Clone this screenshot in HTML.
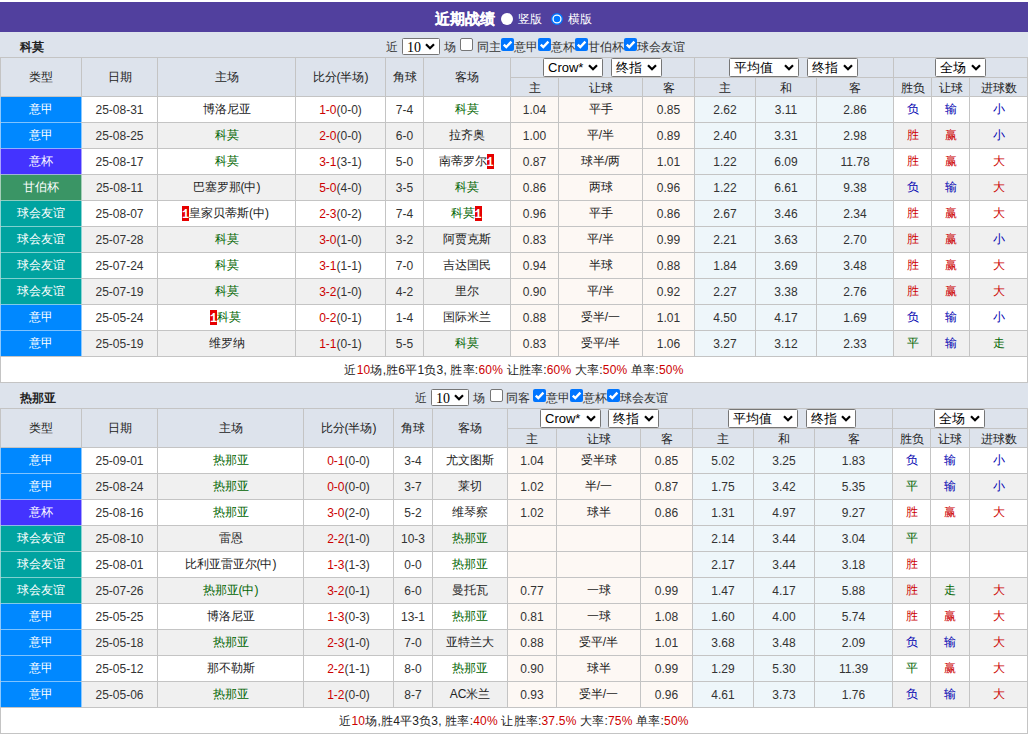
<!DOCTYPE html><html><head><meta charset="utf-8"><style>
html,body{margin:0;padding:0;background:#fff;width:1030px;height:734px;overflow:hidden}
body{font-family:"Liberation Sans",sans-serif;position:relative}
div{position:absolute;white-space:nowrap;box-sizing:content-box}
.bd{display:inline-block;background:#e60000;color:#fff;font-family:"Liberation Mono",monospace;font-weight:bold;font-size:12px;line-height:18px;height:15px;width:7px;text-align:center;vertical-align:top;margin-top:5px;overflow:hidden}
.sel{background:#fff;border:1px solid #767676;border-radius:1.5px}
.sel .lab{position:absolute;left:4px;top:0;bottom:0;line-height:18px;color:#000}
.chev{position:absolute}
.cb{width:11px;height:11px;border-radius:2px}
.cb.off{background:#fff;border:1px solid #767676;width:11px;height:11px}
.cb.on{background:#0075ff;width:13px;height:13px}
.cb svg{position:absolute;left:0;top:0}
.rad{border-radius:50%}
svg{display:block}
</style></head><body><div style="left:0px;top:2px;width:1028px;height:30px;background:#51409e"></div>
<div style="left:435px;top:4px;height:30px;line-height:30px;font-size:15px;font-weight:bold;color:#fff;-webkit-text-stroke:0.2px #fff">近期战绩</div>
<div class="rad" style="left:501px;top:12.5px;width:12px;height:12px;background:#fff"></div>
<div style="left:518px;top:4px;height:30px;line-height:30px;font-size:12px;color:#fff">竖版</div>
<div style="left:551px;top:12.5px;width:12px;height:12px"><svg width="12" height="12" viewBox="0 0 12 12"><circle cx="6" cy="6" r="5.3" fill="#fff" stroke="#0075ff" stroke-width="1.4"/><circle cx="6" cy="6" r="3.3" fill="#0075ff"/></svg></div>
<div style="left:568px;top:4px;height:30px;line-height:30px;font-size:12px;color:#fff">横版</div>
<div style="left:0px;top:32px;width:1028px;height:25px;background:#dde3ec"></div>
<div style="left:20px;top:35px;height:25px;line-height:25px;font-size:12px;font-weight:bold;color:#222">科莫</div>
<div style="left:386px;top:32px;height:25px;line-height:31px;font-size:12px;color:#333">近</div>
<div class="sel" style="left:402px;top:38px;width:36px;height:15px;"><span class="lab" style="font-size:14px;font-family:'Liberation Serif',serif;left:4px;line-height:17px">10</span><svg class="chev" width="10" height="7" viewBox="0 0 10 7" style="right:4px;top:4px"><path d="M1 1.2 L5 5.2 L9 1.2" stroke="#000" stroke-width="2.2" fill="none"/></svg></div>
<div style="left:444px;top:32px;height:25px;line-height:31px;font-size:12px;color:#333">场</div>
<div class="cb off" style="left:460px;top:38px"></div>
<div style="left:477px;top:32px;height:25px;line-height:31px;font-size:12px;color:#333">同主</div>
<div class="cb on" style="left:501px;top:38px"><svg width="13" height="13" viewBox="0 0 13 13"><path d="M2.8 6.6 L5.3 9.1 L10.4 3.6" stroke="#fff" stroke-width="2.4" fill="none"/></svg></div>
<div style="left:514px;top:32px;height:25px;line-height:31px;font-size:12px;color:#333">意甲</div>
<div class="cb on" style="left:538px;top:38px"><svg width="13" height="13" viewBox="0 0 13 13"><path d="M2.8 6.6 L5.3 9.1 L10.4 3.6" stroke="#fff" stroke-width="2.4" fill="none"/></svg></div>
<div style="left:551px;top:32px;height:25px;line-height:31px;font-size:12px;color:#333">意杯</div>
<div class="cb on" style="left:575px;top:38px"><svg width="13" height="13" viewBox="0 0 13 13"><path d="M2.8 6.6 L5.3 9.1 L10.4 3.6" stroke="#fff" stroke-width="2.4" fill="none"/></svg></div>
<div style="left:588px;top:32px;height:25px;line-height:31px;font-size:12px;color:#333">甘伯杯</div>
<div class="cb on" style="left:624px;top:38px"><svg width="13" height="13" viewBox="0 0 13 13"><path d="M2.8 6.6 L5.3 9.1 L10.4 3.6" stroke="#fff" stroke-width="2.4" fill="none"/></svg></div>
<div style="left:637px;top:32px;height:25px;line-height:31px;font-size:12px;color:#333">球会友谊</div>
<div style="left:0px;top:57px;width:1028px;height:39px;background:#dde3ec"></div>
<div style="left:0px;top:97px;width:1028px;height:25px;background:#fff"></div>
<div style="left:511px;top:97px;width:183px;height:25px;background:#fdf8f4"></div>
<div style="left:695px;top:97px;width:198px;height:25px;background:#eef6fa"></div>
<div style="left:1px;top:97px;width:80px;height:25px;background:#0088ff"></div>
<div style="left:0px;top:123px;width:1028px;height:25px;background:#f0f0f0"></div>
<div style="left:511px;top:123px;width:183px;height:25px;background:#fdf8f4"></div>
<div style="left:695px;top:123px;width:198px;height:25px;background:#eef6fa"></div>
<div style="left:1px;top:123px;width:80px;height:25px;background:#0088ff"></div>
<div style="left:0px;top:149px;width:1028px;height:25px;background:#fff"></div>
<div style="left:511px;top:149px;width:183px;height:25px;background:#fdf8f4"></div>
<div style="left:695px;top:149px;width:198px;height:25px;background:#eef6fa"></div>
<div style="left:1px;top:149px;width:80px;height:25px;background:#4433ff"></div>
<div style="left:0px;top:175px;width:1028px;height:25px;background:#f0f0f0"></div>
<div style="left:511px;top:175px;width:183px;height:25px;background:#fdf8f4"></div>
<div style="left:695px;top:175px;width:198px;height:25px;background:#eef6fa"></div>
<div style="left:1px;top:175px;width:80px;height:25px;background:#3a9565"></div>
<div style="left:0px;top:201px;width:1028px;height:25px;background:#fff"></div>
<div style="left:511px;top:201px;width:183px;height:25px;background:#fdf8f4"></div>
<div style="left:695px;top:201px;width:198px;height:25px;background:#eef6fa"></div>
<div style="left:1px;top:201px;width:80px;height:25px;background:#00a3a0"></div>
<div style="left:0px;top:227px;width:1028px;height:25px;background:#f0f0f0"></div>
<div style="left:511px;top:227px;width:183px;height:25px;background:#fdf8f4"></div>
<div style="left:695px;top:227px;width:198px;height:25px;background:#eef6fa"></div>
<div style="left:1px;top:227px;width:80px;height:25px;background:#00a3a0"></div>
<div style="left:0px;top:253px;width:1028px;height:25px;background:#fff"></div>
<div style="left:511px;top:253px;width:183px;height:25px;background:#fdf8f4"></div>
<div style="left:695px;top:253px;width:198px;height:25px;background:#eef6fa"></div>
<div style="left:1px;top:253px;width:80px;height:25px;background:#00a3a0"></div>
<div style="left:0px;top:279px;width:1028px;height:25px;background:#f0f0f0"></div>
<div style="left:511px;top:279px;width:183px;height:25px;background:#fdf8f4"></div>
<div style="left:695px;top:279px;width:198px;height:25px;background:#eef6fa"></div>
<div style="left:1px;top:279px;width:80px;height:25px;background:#00a3a0"></div>
<div style="left:0px;top:305px;width:1028px;height:25px;background:#fff"></div>
<div style="left:511px;top:305px;width:183px;height:25px;background:#fdf8f4"></div>
<div style="left:695px;top:305px;width:198px;height:25px;background:#eef6fa"></div>
<div style="left:1px;top:305px;width:80px;height:25px;background:#0088ff"></div>
<div style="left:0px;top:331px;width:1028px;height:25px;background:#f0f0f0"></div>
<div style="left:511px;top:331px;width:183px;height:25px;background:#fdf8f4"></div>
<div style="left:695px;top:331px;width:198px;height:25px;background:#eef6fa"></div>
<div style="left:1px;top:331px;width:80px;height:25px;background:#0088ff"></div>
<div style="left:0px;top:357px;width:1028px;height:25px;background:#fff"></div>
<div style="left:0px;top:57px;width:1028px;height:1px;background:#c4c4c4"></div>
<div style="left:510px;top:77px;width:518px;height:1px;background:#c4c4c4"></div>
<div style="left:0px;top:96px;width:1028px;height:1px;background:#c4c4c4"></div>
<div style="left:81px;top:122px;width:947px;height:1px;background:#c4c4c4"></div>
<div style="left:1px;top:122px;width:80px;height:1px;background:rgb(127,195,255)"></div>
<div style="left:81px;top:148px;width:947px;height:1px;background:#c4c4c4"></div>
<div style="left:1px;top:148px;width:80px;height:1px;background:rgb(144,174,255)"></div>
<div style="left:81px;top:174px;width:947px;height:1px;background:#c4c4c4"></div>
<div style="left:1px;top:174px;width:80px;height:1px;background:rgb(159,177,216)"></div>
<div style="left:81px;top:200px;width:947px;height:1px;background:#c4c4c4"></div>
<div style="left:1px;top:200px;width:80px;height:1px;background:rgb(142,205,192)"></div>
<div style="left:81px;top:226px;width:947px;height:1px;background:#c4c4c4"></div>
<div style="left:1px;top:226px;width:80px;height:1px;background:rgb(127,209,207)"></div>
<div style="left:81px;top:252px;width:947px;height:1px;background:#c4c4c4"></div>
<div style="left:1px;top:252px;width:80px;height:1px;background:rgb(127,209,207)"></div>
<div style="left:81px;top:278px;width:947px;height:1px;background:#c4c4c4"></div>
<div style="left:1px;top:278px;width:80px;height:1px;background:rgb(127,209,207)"></div>
<div style="left:81px;top:304px;width:947px;height:1px;background:#c4c4c4"></div>
<div style="left:1px;top:304px;width:80px;height:1px;background:rgb(127,202,231)"></div>
<div style="left:81px;top:330px;width:947px;height:1px;background:#c4c4c4"></div>
<div style="left:1px;top:330px;width:80px;height:1px;background:rgb(127,195,255)"></div>
<div style="left:81px;top:356px;width:947px;height:1px;background:#c4c4c4"></div>
<div style="left:0px;top:356px;width:82px;height:1px;background:#c4c4c4"></div>
<div style="left:0px;top:382px;width:1028px;height:1px;background:#c4c4c4"></div>
<div style="left:0px;top:57px;width:1px;height:326px;background:#c4c4c4"></div>
<div style="left:81px;top:57px;width:1px;height:300px;background:#c4c4c4"></div>
<div style="left:157px;top:57px;width:1px;height:300px;background:#c4c4c4"></div>
<div style="left:295px;top:57px;width:1px;height:300px;background:#c4c4c4"></div>
<div style="left:385px;top:57px;width:1px;height:300px;background:#c4c4c4"></div>
<div style="left:423px;top:57px;width:1px;height:300px;background:#c4c4c4"></div>
<div style="left:510px;top:57px;width:1px;height:300px;background:#c4c4c4"></div>
<div style="left:558px;top:77px;width:1px;height:280px;background:#c4c4c4"></div>
<div style="left:642px;top:77px;width:1px;height:280px;background:#c4c4c4"></div>
<div style="left:694px;top:57px;width:1px;height:300px;background:#c4c4c4"></div>
<div style="left:755px;top:77px;width:1px;height:280px;background:#c4c4c4"></div>
<div style="left:816px;top:77px;width:1px;height:280px;background:#c4c4c4"></div>
<div style="left:893px;top:57px;width:1px;height:300px;background:#c4c4c4"></div>
<div style="left:931px;top:77px;width:1px;height:280px;background:#c4c4c4"></div>
<div style="left:969px;top:77px;width:1px;height:280px;background:#c4c4c4"></div>
<div style="left:1027px;top:57px;width:1px;height:326px;background:#c4c4c4"></div>
<div style="left:0px;top:97px;width:1px;height:25px;background:rgb(140,201,255)"></div>
<div style="left:81px;top:97px;width:1px;height:25px;background:rgb(140,201,255)"></div>
<div style="left:0px;top:123px;width:1px;height:25px;background:rgb(140,201,255)"></div>
<div style="left:81px;top:123px;width:1px;height:25px;background:rgb(140,201,255)"></div>
<div style="left:0px;top:149px;width:1px;height:25px;background:rgb(170,163,255)"></div>
<div style="left:81px;top:149px;width:1px;height:25px;background:rgb(170,163,255)"></div>
<div style="left:0px;top:175px;width:1px;height:25px;background:rgb(166,207,185)"></div>
<div style="left:81px;top:175px;width:1px;height:25px;background:rgb(166,207,185)"></div>
<div style="left:0px;top:201px;width:1px;height:25px;background:rgb(140,213,212)"></div>
<div style="left:81px;top:201px;width:1px;height:25px;background:rgb(140,213,212)"></div>
<div style="left:0px;top:227px;width:1px;height:25px;background:rgb(140,213,212)"></div>
<div style="left:81px;top:227px;width:1px;height:25px;background:rgb(140,213,212)"></div>
<div style="left:0px;top:253px;width:1px;height:25px;background:rgb(140,213,212)"></div>
<div style="left:81px;top:253px;width:1px;height:25px;background:rgb(140,213,212)"></div>
<div style="left:0px;top:279px;width:1px;height:25px;background:rgb(140,213,212)"></div>
<div style="left:81px;top:279px;width:1px;height:25px;background:rgb(140,213,212)"></div>
<div style="left:0px;top:305px;width:1px;height:25px;background:rgb(140,201,255)"></div>
<div style="left:81px;top:305px;width:1px;height:25px;background:rgb(140,201,255)"></div>
<div style="left:0px;top:331px;width:1px;height:25px;background:rgb(140,201,255)"></div>
<div style="left:81px;top:331px;width:1px;height:25px;background:rgb(140,201,255)"></div>
<div style="left:1px;top:58px;width:80px;height:38px;line-height:38px;text-align:center;color:#222;font-size:12px;">类型</div>
<div style="left:82px;top:58px;width:75px;height:38px;line-height:38px;text-align:center;color:#222;font-size:12px;">日期</div>
<div style="left:158px;top:58px;width:137px;height:38px;line-height:38px;text-align:center;color:#222;font-size:12px;">主场</div>
<div style="left:296px;top:58px;width:89px;height:38px;line-height:38px;text-align:center;color:#222;font-size:12px;">比分(半场)</div>
<div style="left:386px;top:58px;width:37px;height:38px;line-height:38px;text-align:center;color:#222;font-size:12px;">角球</div>
<div style="left:424px;top:58px;width:86px;height:38px;line-height:38px;text-align:center;color:#222;font-size:12px;">客场</div>
<div style="left:511px;top:79px;width:47px;height:18px;line-height:18px;text-align:center;color:#222;font-size:12px;">主</div>
<div style="left:559px;top:79px;width:83px;height:18px;line-height:18px;text-align:center;color:#222;font-size:12px;">让球</div>
<div style="left:643px;top:79px;width:51px;height:18px;line-height:18px;text-align:center;color:#222;font-size:12px;">客</div>
<div style="left:695px;top:79px;width:60px;height:18px;line-height:18px;text-align:center;color:#222;font-size:12px;">主</div>
<div style="left:756px;top:79px;width:60px;height:18px;line-height:18px;text-align:center;color:#222;font-size:12px;">和</div>
<div style="left:817px;top:79px;width:76px;height:18px;line-height:18px;text-align:center;color:#222;font-size:12px;">客</div>
<div style="left:894px;top:79px;width:37px;height:18px;line-height:18px;text-align:center;color:#222;font-size:12px;">胜负</div>
<div style="left:932px;top:79px;width:37px;height:18px;line-height:18px;text-align:center;color:#222;font-size:12px;">让球</div>
<div style="left:970px;top:79px;width:57px;height:18px;line-height:18px;text-align:center;color:#222;font-size:12px;">进球数</div>
<div style="left:1px;top:97px;width:80px;height:25px;line-height:25px;text-align:center;color:#fff;font-size:12px;">意甲</div>
<div style="left:82px;top:98px;width:75px;height:25px;line-height:25px;text-align:center;color:#333;font-size:12px;">25-08-31</div>
<div style="left:158px;top:97px;width:137px;height:25px;line-height:25px;text-align:center;color:#222;font-size:12px;">博洛尼亚</div>
<div style="left:296px;top:98px;width:89px;height:25px;line-height:25px;text-align:center;color:#222;font-size:12px;"><span style="color:#c00">1-0</span><span style="color:#333">(0-0)</span></div>
<div style="left:386px;top:98px;width:37px;height:25px;line-height:25px;text-align:center;color:#333;font-size:12px;">7-4</div>
<div style="left:424px;top:97px;width:86px;height:25px;line-height:25px;text-align:center;color:#006400;font-size:12px;">科莫</div>
<div style="left:511px;top:98px;width:47px;height:25px;line-height:25px;text-align:center;color:#333;font-size:12px;">1.04</div>
<div style="left:559px;top:97px;width:83px;height:25px;line-height:25px;text-align:center;color:#222;font-size:12px;">平手</div>
<div style="left:643px;top:98px;width:51px;height:25px;line-height:25px;text-align:center;color:#333;font-size:12px;">0.85</div>
<div style="left:695px;top:98px;width:60px;height:25px;line-height:25px;text-align:center;color:#333;font-size:12px;">2.62</div>
<div style="left:756px;top:98px;width:60px;height:25px;line-height:25px;text-align:center;color:#333;font-size:12px;">3.11</div>
<div style="left:817px;top:98px;width:76px;height:25px;line-height:25px;text-align:center;color:#333;font-size:12px;">2.86</div>
<div style="left:894px;top:97px;width:37px;height:25px;line-height:25px;text-align:center;color:#0000b0;font-size:12px;">负</div>
<div style="left:932px;top:97px;width:37px;height:25px;line-height:25px;text-align:center;color:#0000b0;font-size:12px;">输</div>
<div style="left:970px;top:97px;width:57px;height:25px;line-height:25px;text-align:center;color:#0000b0;font-size:12px;">小</div>
<div style="left:1px;top:123px;width:80px;height:25px;line-height:25px;text-align:center;color:#fff;font-size:12px;">意甲</div>
<div style="left:82px;top:124px;width:75px;height:25px;line-height:25px;text-align:center;color:#333;font-size:12px;">25-08-25</div>
<div style="left:158px;top:123px;width:137px;height:25px;line-height:25px;text-align:center;color:#006400;font-size:12px;">科莫</div>
<div style="left:296px;top:124px;width:89px;height:25px;line-height:25px;text-align:center;color:#222;font-size:12px;"><span style="color:#c00">2-0</span><span style="color:#333">(0-0)</span></div>
<div style="left:386px;top:124px;width:37px;height:25px;line-height:25px;text-align:center;color:#333;font-size:12px;">6-0</div>
<div style="left:424px;top:123px;width:86px;height:25px;line-height:25px;text-align:center;color:#222;font-size:12px;">拉齐奥</div>
<div style="left:511px;top:124px;width:47px;height:25px;line-height:25px;text-align:center;color:#333;font-size:12px;">1.00</div>
<div style="left:559px;top:123px;width:83px;height:25px;line-height:25px;text-align:center;color:#222;font-size:12px;">平/半</div>
<div style="left:643px;top:124px;width:51px;height:25px;line-height:25px;text-align:center;color:#333;font-size:12px;">0.89</div>
<div style="left:695px;top:124px;width:60px;height:25px;line-height:25px;text-align:center;color:#333;font-size:12px;">2.40</div>
<div style="left:756px;top:124px;width:60px;height:25px;line-height:25px;text-align:center;color:#333;font-size:12px;">3.31</div>
<div style="left:817px;top:124px;width:76px;height:25px;line-height:25px;text-align:center;color:#333;font-size:12px;">2.98</div>
<div style="left:894px;top:123px;width:37px;height:25px;line-height:25px;text-align:center;color:#c00;font-size:12px;">胜</div>
<div style="left:932px;top:123px;width:37px;height:25px;line-height:25px;text-align:center;color:#c00;font-size:12px;">赢</div>
<div style="left:970px;top:123px;width:57px;height:25px;line-height:25px;text-align:center;color:#0000b0;font-size:12px;">小</div>
<div style="left:1px;top:149px;width:80px;height:25px;line-height:25px;text-align:center;color:#fff;font-size:12px;">意杯</div>
<div style="left:82px;top:150px;width:75px;height:25px;line-height:25px;text-align:center;color:#333;font-size:12px;">25-08-17</div>
<div style="left:158px;top:149px;width:137px;height:25px;line-height:25px;text-align:center;color:#006400;font-size:12px;">科莫</div>
<div style="left:296px;top:150px;width:89px;height:25px;line-height:25px;text-align:center;color:#222;font-size:12px;"><span style="color:#c00">3-1</span><span style="color:#333">(3-1)</span></div>
<div style="left:386px;top:150px;width:37px;height:25px;line-height:25px;text-align:center;color:#333;font-size:12px;">5-0</div>
<div style="left:423px;top:149px;width:86px;height:25px;line-height:25px;text-align:center;color:#222;font-size:12px;">南蒂罗尔<span class="bd">1</span></div>
<div style="left:511px;top:150px;width:47px;height:25px;line-height:25px;text-align:center;color:#333;font-size:12px;">0.87</div>
<div style="left:559px;top:149px;width:83px;height:25px;line-height:25px;text-align:center;color:#222;font-size:12px;">球半/两</div>
<div style="left:643px;top:150px;width:51px;height:25px;line-height:25px;text-align:center;color:#333;font-size:12px;">1.01</div>
<div style="left:695px;top:150px;width:60px;height:25px;line-height:25px;text-align:center;color:#333;font-size:12px;">1.22</div>
<div style="left:756px;top:150px;width:60px;height:25px;line-height:25px;text-align:center;color:#333;font-size:12px;">6.09</div>
<div style="left:817px;top:150px;width:76px;height:25px;line-height:25px;text-align:center;color:#333;font-size:12px;">11.78</div>
<div style="left:894px;top:149px;width:37px;height:25px;line-height:25px;text-align:center;color:#c00;font-size:12px;">胜</div>
<div style="left:932px;top:149px;width:37px;height:25px;line-height:25px;text-align:center;color:#c00;font-size:12px;">赢</div>
<div style="left:970px;top:149px;width:57px;height:25px;line-height:25px;text-align:center;color:#c00;font-size:12px;">大</div>
<div style="left:1px;top:175px;width:80px;height:25px;line-height:25px;text-align:center;color:#fff;font-size:12px;">甘伯杯</div>
<div style="left:82px;top:176px;width:75px;height:25px;line-height:25px;text-align:center;color:#333;font-size:12px;">25-08-11</div>
<div style="left:158px;top:175px;width:137px;height:25px;line-height:25px;text-align:center;color:#222;font-size:12px;">巴塞罗那(中)</div>
<div style="left:296px;top:176px;width:89px;height:25px;line-height:25px;text-align:center;color:#222;font-size:12px;"><span style="color:#c00">5-0</span><span style="color:#333">(4-0)</span></div>
<div style="left:386px;top:176px;width:37px;height:25px;line-height:25px;text-align:center;color:#333;font-size:12px;">3-5</div>
<div style="left:424px;top:175px;width:86px;height:25px;line-height:25px;text-align:center;color:#006400;font-size:12px;">科莫</div>
<div style="left:511px;top:176px;width:47px;height:25px;line-height:25px;text-align:center;color:#333;font-size:12px;">0.86</div>
<div style="left:559px;top:175px;width:83px;height:25px;line-height:25px;text-align:center;color:#222;font-size:12px;">两球</div>
<div style="left:643px;top:176px;width:51px;height:25px;line-height:25px;text-align:center;color:#333;font-size:12px;">0.96</div>
<div style="left:695px;top:176px;width:60px;height:25px;line-height:25px;text-align:center;color:#333;font-size:12px;">1.22</div>
<div style="left:756px;top:176px;width:60px;height:25px;line-height:25px;text-align:center;color:#333;font-size:12px;">6.61</div>
<div style="left:817px;top:176px;width:76px;height:25px;line-height:25px;text-align:center;color:#333;font-size:12px;">9.38</div>
<div style="left:894px;top:175px;width:37px;height:25px;line-height:25px;text-align:center;color:#0000b0;font-size:12px;">负</div>
<div style="left:932px;top:175px;width:37px;height:25px;line-height:25px;text-align:center;color:#0000b0;font-size:12px;">输</div>
<div style="left:970px;top:175px;width:57px;height:25px;line-height:25px;text-align:center;color:#c00;font-size:12px;">大</div>
<div style="left:1px;top:201px;width:80px;height:25px;line-height:25px;text-align:center;color:#fff;font-size:12px;">球会友谊</div>
<div style="left:82px;top:202px;width:75px;height:25px;line-height:25px;text-align:center;color:#333;font-size:12px;">25-08-07</div>
<div style="left:157px;top:201px;width:137px;height:25px;line-height:25px;text-align:center;color:#222;font-size:12px;"><span class="bd">1</span>皇家贝蒂斯(中)</div>
<div style="left:296px;top:202px;width:89px;height:25px;line-height:25px;text-align:center;color:#222;font-size:12px;"><span style="color:#c00">2-3</span><span style="color:#333">(0-2)</span></div>
<div style="left:386px;top:202px;width:37px;height:25px;line-height:25px;text-align:center;color:#333;font-size:12px;">7-4</div>
<div style="left:423px;top:201px;width:86px;height:25px;line-height:25px;text-align:center;color:#006400;font-size:12px;">科莫<span class="bd">1</span></div>
<div style="left:511px;top:202px;width:47px;height:25px;line-height:25px;text-align:center;color:#333;font-size:12px;">0.96</div>
<div style="left:559px;top:201px;width:83px;height:25px;line-height:25px;text-align:center;color:#222;font-size:12px;">平手</div>
<div style="left:643px;top:202px;width:51px;height:25px;line-height:25px;text-align:center;color:#333;font-size:12px;">0.86</div>
<div style="left:695px;top:202px;width:60px;height:25px;line-height:25px;text-align:center;color:#333;font-size:12px;">2.67</div>
<div style="left:756px;top:202px;width:60px;height:25px;line-height:25px;text-align:center;color:#333;font-size:12px;">3.46</div>
<div style="left:817px;top:202px;width:76px;height:25px;line-height:25px;text-align:center;color:#333;font-size:12px;">2.34</div>
<div style="left:894px;top:201px;width:37px;height:25px;line-height:25px;text-align:center;color:#c00;font-size:12px;">胜</div>
<div style="left:932px;top:201px;width:37px;height:25px;line-height:25px;text-align:center;color:#c00;font-size:12px;">赢</div>
<div style="left:970px;top:201px;width:57px;height:25px;line-height:25px;text-align:center;color:#c00;font-size:12px;">大</div>
<div style="left:1px;top:227px;width:80px;height:25px;line-height:25px;text-align:center;color:#fff;font-size:12px;">球会友谊</div>
<div style="left:82px;top:228px;width:75px;height:25px;line-height:25px;text-align:center;color:#333;font-size:12px;">25-07-28</div>
<div style="left:158px;top:227px;width:137px;height:25px;line-height:25px;text-align:center;color:#006400;font-size:12px;">科莫</div>
<div style="left:296px;top:228px;width:89px;height:25px;line-height:25px;text-align:center;color:#222;font-size:12px;"><span style="color:#c00">3-0</span><span style="color:#333">(1-0)</span></div>
<div style="left:386px;top:228px;width:37px;height:25px;line-height:25px;text-align:center;color:#333;font-size:12px;">3-2</div>
<div style="left:424px;top:227px;width:86px;height:25px;line-height:25px;text-align:center;color:#222;font-size:12px;">阿贾克斯</div>
<div style="left:511px;top:228px;width:47px;height:25px;line-height:25px;text-align:center;color:#333;font-size:12px;">0.83</div>
<div style="left:559px;top:227px;width:83px;height:25px;line-height:25px;text-align:center;color:#222;font-size:12px;">平/半</div>
<div style="left:643px;top:228px;width:51px;height:25px;line-height:25px;text-align:center;color:#333;font-size:12px;">0.99</div>
<div style="left:695px;top:228px;width:60px;height:25px;line-height:25px;text-align:center;color:#333;font-size:12px;">2.21</div>
<div style="left:756px;top:228px;width:60px;height:25px;line-height:25px;text-align:center;color:#333;font-size:12px;">3.63</div>
<div style="left:817px;top:228px;width:76px;height:25px;line-height:25px;text-align:center;color:#333;font-size:12px;">2.70</div>
<div style="left:894px;top:227px;width:37px;height:25px;line-height:25px;text-align:center;color:#c00;font-size:12px;">胜</div>
<div style="left:932px;top:227px;width:37px;height:25px;line-height:25px;text-align:center;color:#c00;font-size:12px;">赢</div>
<div style="left:970px;top:227px;width:57px;height:25px;line-height:25px;text-align:center;color:#0000b0;font-size:12px;">小</div>
<div style="left:1px;top:253px;width:80px;height:25px;line-height:25px;text-align:center;color:#fff;font-size:12px;">球会友谊</div>
<div style="left:82px;top:254px;width:75px;height:25px;line-height:25px;text-align:center;color:#333;font-size:12px;">25-07-24</div>
<div style="left:158px;top:253px;width:137px;height:25px;line-height:25px;text-align:center;color:#006400;font-size:12px;">科莫</div>
<div style="left:296px;top:254px;width:89px;height:25px;line-height:25px;text-align:center;color:#222;font-size:12px;"><span style="color:#c00">3-1</span><span style="color:#333">(1-1)</span></div>
<div style="left:386px;top:254px;width:37px;height:25px;line-height:25px;text-align:center;color:#333;font-size:12px;">7-0</div>
<div style="left:424px;top:253px;width:86px;height:25px;line-height:25px;text-align:center;color:#222;font-size:12px;">吉达国民</div>
<div style="left:511px;top:254px;width:47px;height:25px;line-height:25px;text-align:center;color:#333;font-size:12px;">0.94</div>
<div style="left:559px;top:253px;width:83px;height:25px;line-height:25px;text-align:center;color:#222;font-size:12px;">半球</div>
<div style="left:643px;top:254px;width:51px;height:25px;line-height:25px;text-align:center;color:#333;font-size:12px;">0.88</div>
<div style="left:695px;top:254px;width:60px;height:25px;line-height:25px;text-align:center;color:#333;font-size:12px;">1.84</div>
<div style="left:756px;top:254px;width:60px;height:25px;line-height:25px;text-align:center;color:#333;font-size:12px;">3.69</div>
<div style="left:817px;top:254px;width:76px;height:25px;line-height:25px;text-align:center;color:#333;font-size:12px;">3.48</div>
<div style="left:894px;top:253px;width:37px;height:25px;line-height:25px;text-align:center;color:#c00;font-size:12px;">胜</div>
<div style="left:932px;top:253px;width:37px;height:25px;line-height:25px;text-align:center;color:#c00;font-size:12px;">赢</div>
<div style="left:970px;top:253px;width:57px;height:25px;line-height:25px;text-align:center;color:#c00;font-size:12px;">大</div>
<div style="left:1px;top:279px;width:80px;height:25px;line-height:25px;text-align:center;color:#fff;font-size:12px;">球会友谊</div>
<div style="left:82px;top:280px;width:75px;height:25px;line-height:25px;text-align:center;color:#333;font-size:12px;">25-07-19</div>
<div style="left:158px;top:279px;width:137px;height:25px;line-height:25px;text-align:center;color:#006400;font-size:12px;">科莫</div>
<div style="left:296px;top:280px;width:89px;height:25px;line-height:25px;text-align:center;color:#222;font-size:12px;"><span style="color:#c00">3-2</span><span style="color:#333">(1-0)</span></div>
<div style="left:386px;top:280px;width:37px;height:25px;line-height:25px;text-align:center;color:#333;font-size:12px;">4-2</div>
<div style="left:424px;top:279px;width:86px;height:25px;line-height:25px;text-align:center;color:#222;font-size:12px;">里尔</div>
<div style="left:511px;top:280px;width:47px;height:25px;line-height:25px;text-align:center;color:#333;font-size:12px;">0.90</div>
<div style="left:559px;top:279px;width:83px;height:25px;line-height:25px;text-align:center;color:#222;font-size:12px;">平/半</div>
<div style="left:643px;top:280px;width:51px;height:25px;line-height:25px;text-align:center;color:#333;font-size:12px;">0.92</div>
<div style="left:695px;top:280px;width:60px;height:25px;line-height:25px;text-align:center;color:#333;font-size:12px;">2.27</div>
<div style="left:756px;top:280px;width:60px;height:25px;line-height:25px;text-align:center;color:#333;font-size:12px;">3.38</div>
<div style="left:817px;top:280px;width:76px;height:25px;line-height:25px;text-align:center;color:#333;font-size:12px;">2.76</div>
<div style="left:894px;top:279px;width:37px;height:25px;line-height:25px;text-align:center;color:#c00;font-size:12px;">胜</div>
<div style="left:932px;top:279px;width:37px;height:25px;line-height:25px;text-align:center;color:#c00;font-size:12px;">赢</div>
<div style="left:970px;top:279px;width:57px;height:25px;line-height:25px;text-align:center;color:#c00;font-size:12px;">大</div>
<div style="left:1px;top:305px;width:80px;height:25px;line-height:25px;text-align:center;color:#fff;font-size:12px;">意甲</div>
<div style="left:82px;top:306px;width:75px;height:25px;line-height:25px;text-align:center;color:#333;font-size:12px;">25-05-24</div>
<div style="left:157px;top:305px;width:137px;height:25px;line-height:25px;text-align:center;color:#006400;font-size:12px;"><span class="bd">1</span>科莫</div>
<div style="left:296px;top:306px;width:89px;height:25px;line-height:25px;text-align:center;color:#222;font-size:12px;"><span style="color:#c00">0-2</span><span style="color:#333">(0-1)</span></div>
<div style="left:386px;top:306px;width:37px;height:25px;line-height:25px;text-align:center;color:#333;font-size:12px;">1-4</div>
<div style="left:424px;top:305px;width:86px;height:25px;line-height:25px;text-align:center;color:#222;font-size:12px;">国际米兰</div>
<div style="left:511px;top:306px;width:47px;height:25px;line-height:25px;text-align:center;color:#333;font-size:12px;">0.88</div>
<div style="left:559px;top:305px;width:83px;height:25px;line-height:25px;text-align:center;color:#222;font-size:12px;">受半/一</div>
<div style="left:643px;top:306px;width:51px;height:25px;line-height:25px;text-align:center;color:#333;font-size:12px;">1.01</div>
<div style="left:695px;top:306px;width:60px;height:25px;line-height:25px;text-align:center;color:#333;font-size:12px;">4.50</div>
<div style="left:756px;top:306px;width:60px;height:25px;line-height:25px;text-align:center;color:#333;font-size:12px;">4.17</div>
<div style="left:817px;top:306px;width:76px;height:25px;line-height:25px;text-align:center;color:#333;font-size:12px;">1.69</div>
<div style="left:894px;top:305px;width:37px;height:25px;line-height:25px;text-align:center;color:#0000b0;font-size:12px;">负</div>
<div style="left:932px;top:305px;width:37px;height:25px;line-height:25px;text-align:center;color:#0000b0;font-size:12px;">输</div>
<div style="left:970px;top:305px;width:57px;height:25px;line-height:25px;text-align:center;color:#0000b0;font-size:12px;">小</div>
<div style="left:1px;top:331px;width:80px;height:25px;line-height:25px;text-align:center;color:#fff;font-size:12px;">意甲</div>
<div style="left:82px;top:332px;width:75px;height:25px;line-height:25px;text-align:center;color:#333;font-size:12px;">25-05-19</div>
<div style="left:158px;top:331px;width:137px;height:25px;line-height:25px;text-align:center;color:#222;font-size:12px;">维罗纳</div>
<div style="left:296px;top:332px;width:89px;height:25px;line-height:25px;text-align:center;color:#222;font-size:12px;"><span style="color:#c00">1-1</span><span style="color:#333">(0-1)</span></div>
<div style="left:386px;top:332px;width:37px;height:25px;line-height:25px;text-align:center;color:#333;font-size:12px;">5-5</div>
<div style="left:424px;top:331px;width:86px;height:25px;line-height:25px;text-align:center;color:#006400;font-size:12px;">科莫</div>
<div style="left:511px;top:332px;width:47px;height:25px;line-height:25px;text-align:center;color:#333;font-size:12px;">0.83</div>
<div style="left:559px;top:331px;width:83px;height:25px;line-height:25px;text-align:center;color:#222;font-size:12px;">受平/半</div>
<div style="left:643px;top:332px;width:51px;height:25px;line-height:25px;text-align:center;color:#333;font-size:12px;">1.06</div>
<div style="left:695px;top:332px;width:60px;height:25px;line-height:25px;text-align:center;color:#333;font-size:12px;">3.27</div>
<div style="left:756px;top:332px;width:60px;height:25px;line-height:25px;text-align:center;color:#333;font-size:12px;">3.12</div>
<div style="left:817px;top:332px;width:76px;height:25px;line-height:25px;text-align:center;color:#333;font-size:12px;">2.33</div>
<div style="left:894px;top:331px;width:37px;height:25px;line-height:25px;text-align:center;color:#006400;font-size:12px;">平</div>
<div style="left:932px;top:331px;width:37px;height:25px;line-height:25px;text-align:center;color:#0000b0;font-size:12px;">输</div>
<div style="left:970px;top:331px;width:57px;height:25px;line-height:25px;text-align:center;color:#006400;font-size:12px;">走</div>
<div style="left:1px;top:358px;width:1026px;height:25px;line-height:25px;text-align:center;color:#222;font-size:12px;letter-spacing:0.2px">近<span style="color:#c00">10</span>场,胜6平1负3, 胜率:<span style="color:#c00">60%</span> 让胜率:<span style="color:#c00">60%</span> 大率:<span style="color:#c00">50%</span> 单率:<span style="color:#c00">50%</span></div>
<div class="sel" style="left:543px;top:58px;width:58px;height:17px;"><span class="lab" style="font-size:13px;">Crow*</span><svg class="chev" width="10" height="7" viewBox="0 0 10 7" style="right:4px;top:5px"><path d="M1 1.2 L5 5.2 L9 1.2" stroke="#000" stroke-width="2.2" fill="none"/></svg></div>
<div class="sel" style="left:611px;top:58px;width:49px;height:17px;"><span class="lab" style="font-size:13px;">终指</span><svg class="chev" width="10" height="7" viewBox="0 0 10 7" style="right:4px;top:5px"><path d="M1 1.2 L5 5.2 L9 1.2" stroke="#000" stroke-width="2.2" fill="none"/></svg></div>
<div class="sel" style="left:729px;top:58px;width:68px;height:17px;"><span class="lab" style="font-size:13px;">平均值</span><svg class="chev" width="10" height="7" viewBox="0 0 10 7" style="right:4px;top:5px"><path d="M1 1.2 L5 5.2 L9 1.2" stroke="#000" stroke-width="2.2" fill="none"/></svg></div>
<div class="sel" style="left:807px;top:58px;width:49px;height:17px;"><span class="lab" style="font-size:13px;">终指</span><svg class="chev" width="10" height="7" viewBox="0 0 10 7" style="right:4px;top:5px"><path d="M1 1.2 L5 5.2 L9 1.2" stroke="#000" stroke-width="2.2" fill="none"/></svg></div>
<div class="sel" style="left:935px;top:58px;width:49px;height:17px;"><span class="lab" style="font-size:13px;">全场</span><svg class="chev" width="10" height="7" viewBox="0 0 10 7" style="right:4px;top:5px"><path d="M1 1.2 L5 5.2 L9 1.2" stroke="#000" stroke-width="2.2" fill="none"/></svg></div>
<div style="left:0px;top:383px;width:1028px;height:25px;background:#dde3ec"></div>
<div style="left:20px;top:386px;height:25px;line-height:25px;font-size:12px;font-weight:bold;color:#222">热那亚</div>
<div style="left:415px;top:383px;height:25px;line-height:31px;font-size:12px;color:#333">近</div>
<div class="sel" style="left:431px;top:389px;width:36px;height:15px;"><span class="lab" style="font-size:14px;font-family:'Liberation Serif',serif;left:4px;line-height:17px">10</span><svg class="chev" width="10" height="7" viewBox="0 0 10 7" style="right:4px;top:4px"><path d="M1 1.2 L5 5.2 L9 1.2" stroke="#000" stroke-width="2.2" fill="none"/></svg></div>
<div style="left:473px;top:383px;height:25px;line-height:31px;font-size:12px;color:#333">场</div>
<div class="cb off" style="left:490px;top:389px"></div>
<div style="left:506px;top:383px;height:25px;line-height:31px;font-size:12px;color:#333">同客</div>
<div class="cb on" style="left:533px;top:389px"><svg width="13" height="13" viewBox="0 0 13 13"><path d="M2.8 6.6 L5.3 9.1 L10.4 3.6" stroke="#fff" stroke-width="2.4" fill="none"/></svg></div>
<div style="left:546px;top:383px;height:25px;line-height:31px;font-size:12px;color:#333">意甲</div>
<div class="cb on" style="left:570px;top:389px"><svg width="13" height="13" viewBox="0 0 13 13"><path d="M2.8 6.6 L5.3 9.1 L10.4 3.6" stroke="#fff" stroke-width="2.4" fill="none"/></svg></div>
<div style="left:583px;top:383px;height:25px;line-height:31px;font-size:12px;color:#333">意杯</div>
<div class="cb on" style="left:607px;top:389px"><svg width="13" height="13" viewBox="0 0 13 13"><path d="M2.8 6.6 L5.3 9.1 L10.4 3.6" stroke="#fff" stroke-width="2.4" fill="none"/></svg></div>
<div style="left:620px;top:383px;height:25px;line-height:31px;font-size:12px;color:#333">球会友谊</div>
<div style="left:0px;top:408px;width:1028px;height:39px;background:#dde3ec"></div>
<div style="left:0px;top:448px;width:1028px;height:25px;background:#fff"></div>
<div style="left:508px;top:448px;width:184px;height:25px;background:#fdf8f4"></div>
<div style="left:693px;top:448px;width:199px;height:25px;background:#eef6fa"></div>
<div style="left:1px;top:448px;width:80px;height:25px;background:#0088ff"></div>
<div style="left:0px;top:474px;width:1028px;height:25px;background:#f0f0f0"></div>
<div style="left:508px;top:474px;width:184px;height:25px;background:#fdf8f4"></div>
<div style="left:693px;top:474px;width:199px;height:25px;background:#eef6fa"></div>
<div style="left:1px;top:474px;width:80px;height:25px;background:#0088ff"></div>
<div style="left:0px;top:500px;width:1028px;height:25px;background:#fff"></div>
<div style="left:508px;top:500px;width:184px;height:25px;background:#fdf8f4"></div>
<div style="left:693px;top:500px;width:199px;height:25px;background:#eef6fa"></div>
<div style="left:1px;top:500px;width:80px;height:25px;background:#4433ff"></div>
<div style="left:0px;top:526px;width:1028px;height:25px;background:#f0f0f0"></div>
<div style="left:508px;top:526px;width:184px;height:25px;background:#fdf8f4"></div>
<div style="left:693px;top:526px;width:199px;height:25px;background:#eef6fa"></div>
<div style="left:1px;top:526px;width:80px;height:25px;background:#00a3a0"></div>
<div style="left:0px;top:552px;width:1028px;height:25px;background:#fff"></div>
<div style="left:508px;top:552px;width:184px;height:25px;background:#fdf8f4"></div>
<div style="left:693px;top:552px;width:199px;height:25px;background:#eef6fa"></div>
<div style="left:1px;top:552px;width:80px;height:25px;background:#00a3a0"></div>
<div style="left:0px;top:578px;width:1028px;height:25px;background:#f0f0f0"></div>
<div style="left:508px;top:578px;width:184px;height:25px;background:#fdf8f4"></div>
<div style="left:693px;top:578px;width:199px;height:25px;background:#eef6fa"></div>
<div style="left:1px;top:578px;width:80px;height:25px;background:#00a3a0"></div>
<div style="left:0px;top:604px;width:1028px;height:25px;background:#fff"></div>
<div style="left:508px;top:604px;width:184px;height:25px;background:#fdf8f4"></div>
<div style="left:693px;top:604px;width:199px;height:25px;background:#eef6fa"></div>
<div style="left:1px;top:604px;width:80px;height:25px;background:#0088ff"></div>
<div style="left:0px;top:630px;width:1028px;height:25px;background:#f0f0f0"></div>
<div style="left:508px;top:630px;width:184px;height:25px;background:#fdf8f4"></div>
<div style="left:693px;top:630px;width:199px;height:25px;background:#eef6fa"></div>
<div style="left:1px;top:630px;width:80px;height:25px;background:#0088ff"></div>
<div style="left:0px;top:656px;width:1028px;height:25px;background:#fff"></div>
<div style="left:508px;top:656px;width:184px;height:25px;background:#fdf8f4"></div>
<div style="left:693px;top:656px;width:199px;height:25px;background:#eef6fa"></div>
<div style="left:1px;top:656px;width:80px;height:25px;background:#0088ff"></div>
<div style="left:0px;top:682px;width:1028px;height:25px;background:#f0f0f0"></div>
<div style="left:508px;top:682px;width:184px;height:25px;background:#fdf8f4"></div>
<div style="left:693px;top:682px;width:199px;height:25px;background:#eef6fa"></div>
<div style="left:1px;top:682px;width:80px;height:25px;background:#0088ff"></div>
<div style="left:0px;top:708px;width:1028px;height:25px;background:#fff"></div>
<div style="left:0px;top:408px;width:1028px;height:1px;background:#c4c4c4"></div>
<div style="left:507px;top:428px;width:521px;height:1px;background:#c4c4c4"></div>
<div style="left:0px;top:447px;width:1028px;height:1px;background:#c4c4c4"></div>
<div style="left:81px;top:473px;width:947px;height:1px;background:#c4c4c4"></div>
<div style="left:1px;top:473px;width:80px;height:1px;background:rgb(127,195,255)"></div>
<div style="left:81px;top:499px;width:947px;height:1px;background:#c4c4c4"></div>
<div style="left:1px;top:499px;width:80px;height:1px;background:rgb(144,174,255)"></div>
<div style="left:81px;top:525px;width:947px;height:1px;background:#c4c4c4"></div>
<div style="left:1px;top:525px;width:80px;height:1px;background:rgb(144,181,231)"></div>
<div style="left:81px;top:551px;width:947px;height:1px;background:#c4c4c4"></div>
<div style="left:1px;top:551px;width:80px;height:1px;background:rgb(127,209,207)"></div>
<div style="left:81px;top:577px;width:947px;height:1px;background:#c4c4c4"></div>
<div style="left:1px;top:577px;width:80px;height:1px;background:rgb(127,209,207)"></div>
<div style="left:81px;top:603px;width:947px;height:1px;background:#c4c4c4"></div>
<div style="left:1px;top:603px;width:80px;height:1px;background:rgb(127,202,231)"></div>
<div style="left:81px;top:629px;width:947px;height:1px;background:#c4c4c4"></div>
<div style="left:1px;top:629px;width:80px;height:1px;background:rgb(127,195,255)"></div>
<div style="left:81px;top:655px;width:947px;height:1px;background:#c4c4c4"></div>
<div style="left:1px;top:655px;width:80px;height:1px;background:rgb(127,195,255)"></div>
<div style="left:81px;top:681px;width:947px;height:1px;background:#c4c4c4"></div>
<div style="left:1px;top:681px;width:80px;height:1px;background:rgb(127,195,255)"></div>
<div style="left:81px;top:707px;width:947px;height:1px;background:#c4c4c4"></div>
<div style="left:0px;top:707px;width:82px;height:1px;background:#c4c4c4"></div>
<div style="left:0px;top:733px;width:1028px;height:1px;background:#c4c4c4"></div>
<div style="left:0px;top:408px;width:1px;height:326px;background:#c4c4c4"></div>
<div style="left:81px;top:408px;width:1px;height:300px;background:#c4c4c4"></div>
<div style="left:157px;top:408px;width:1px;height:300px;background:#c4c4c4"></div>
<div style="left:303px;top:408px;width:1px;height:300px;background:#c4c4c4"></div>
<div style="left:393px;top:408px;width:1px;height:300px;background:#c4c4c4"></div>
<div style="left:432px;top:408px;width:1px;height:300px;background:#c4c4c4"></div>
<div style="left:507px;top:408px;width:1px;height:300px;background:#c4c4c4"></div>
<div style="left:556px;top:428px;width:1px;height:280px;background:#c4c4c4"></div>
<div style="left:640px;top:428px;width:1px;height:280px;background:#c4c4c4"></div>
<div style="left:692px;top:408px;width:1px;height:300px;background:#c4c4c4"></div>
<div style="left:753px;top:428px;width:1px;height:280px;background:#c4c4c4"></div>
<div style="left:814px;top:428px;width:1px;height:280px;background:#c4c4c4"></div>
<div style="left:892px;top:408px;width:1px;height:300px;background:#c4c4c4"></div>
<div style="left:930px;top:428px;width:1px;height:280px;background:#c4c4c4"></div>
<div style="left:969px;top:428px;width:1px;height:280px;background:#c4c4c4"></div>
<div style="left:1027px;top:408px;width:1px;height:326px;background:#c4c4c4"></div>
<div style="left:0px;top:448px;width:1px;height:25px;background:rgb(140,201,255)"></div>
<div style="left:81px;top:448px;width:1px;height:25px;background:rgb(140,201,255)"></div>
<div style="left:0px;top:474px;width:1px;height:25px;background:rgb(140,201,255)"></div>
<div style="left:81px;top:474px;width:1px;height:25px;background:rgb(140,201,255)"></div>
<div style="left:0px;top:500px;width:1px;height:25px;background:rgb(170,163,255)"></div>
<div style="left:81px;top:500px;width:1px;height:25px;background:rgb(170,163,255)"></div>
<div style="left:0px;top:526px;width:1px;height:25px;background:rgb(140,213,212)"></div>
<div style="left:81px;top:526px;width:1px;height:25px;background:rgb(140,213,212)"></div>
<div style="left:0px;top:552px;width:1px;height:25px;background:rgb(140,213,212)"></div>
<div style="left:81px;top:552px;width:1px;height:25px;background:rgb(140,213,212)"></div>
<div style="left:0px;top:578px;width:1px;height:25px;background:rgb(140,213,212)"></div>
<div style="left:81px;top:578px;width:1px;height:25px;background:rgb(140,213,212)"></div>
<div style="left:0px;top:604px;width:1px;height:25px;background:rgb(140,201,255)"></div>
<div style="left:81px;top:604px;width:1px;height:25px;background:rgb(140,201,255)"></div>
<div style="left:0px;top:630px;width:1px;height:25px;background:rgb(140,201,255)"></div>
<div style="left:81px;top:630px;width:1px;height:25px;background:rgb(140,201,255)"></div>
<div style="left:0px;top:656px;width:1px;height:25px;background:rgb(140,201,255)"></div>
<div style="left:81px;top:656px;width:1px;height:25px;background:rgb(140,201,255)"></div>
<div style="left:0px;top:682px;width:1px;height:25px;background:rgb(140,201,255)"></div>
<div style="left:81px;top:682px;width:1px;height:25px;background:rgb(140,201,255)"></div>
<div style="left:1px;top:409px;width:80px;height:38px;line-height:38px;text-align:center;color:#222;font-size:12px;">类型</div>
<div style="left:82px;top:409px;width:75px;height:38px;line-height:38px;text-align:center;color:#222;font-size:12px;">日期</div>
<div style="left:158px;top:409px;width:145px;height:38px;line-height:38px;text-align:center;color:#222;font-size:12px;">主场</div>
<div style="left:304px;top:409px;width:89px;height:38px;line-height:38px;text-align:center;color:#222;font-size:12px;">比分(半场)</div>
<div style="left:394px;top:409px;width:38px;height:38px;line-height:38px;text-align:center;color:#222;font-size:12px;">角球</div>
<div style="left:433px;top:409px;width:74px;height:38px;line-height:38px;text-align:center;color:#222;font-size:12px;">客场</div>
<div style="left:508px;top:430px;width:48px;height:18px;line-height:18px;text-align:center;color:#222;font-size:12px;">主</div>
<div style="left:557px;top:430px;width:83px;height:18px;line-height:18px;text-align:center;color:#222;font-size:12px;">让球</div>
<div style="left:641px;top:430px;width:51px;height:18px;line-height:18px;text-align:center;color:#222;font-size:12px;">客</div>
<div style="left:693px;top:430px;width:60px;height:18px;line-height:18px;text-align:center;color:#222;font-size:12px;">主</div>
<div style="left:754px;top:430px;width:60px;height:18px;line-height:18px;text-align:center;color:#222;font-size:12px;">和</div>
<div style="left:815px;top:430px;width:77px;height:18px;line-height:18px;text-align:center;color:#222;font-size:12px;">客</div>
<div style="left:893px;top:430px;width:37px;height:18px;line-height:18px;text-align:center;color:#222;font-size:12px;">胜负</div>
<div style="left:931px;top:430px;width:38px;height:18px;line-height:18px;text-align:center;color:#222;font-size:12px;">让球</div>
<div style="left:970px;top:430px;width:57px;height:18px;line-height:18px;text-align:center;color:#222;font-size:12px;">进球数</div>
<div style="left:1px;top:448px;width:80px;height:25px;line-height:25px;text-align:center;color:#fff;font-size:12px;">意甲</div>
<div style="left:82px;top:449px;width:75px;height:25px;line-height:25px;text-align:center;color:#333;font-size:12px;">25-09-01</div>
<div style="left:158px;top:448px;width:145px;height:25px;line-height:25px;text-align:center;color:#006400;font-size:12px;">热那亚</div>
<div style="left:304px;top:449px;width:89px;height:25px;line-height:25px;text-align:center;color:#222;font-size:12px;"><span style="color:#c00">0-1</span><span style="color:#333">(0-0)</span></div>
<div style="left:394px;top:449px;width:38px;height:25px;line-height:25px;text-align:center;color:#333;font-size:12px;">3-4</div>
<div style="left:433px;top:448px;width:74px;height:25px;line-height:25px;text-align:center;color:#222;font-size:12px;">尤文图斯</div>
<div style="left:508px;top:449px;width:48px;height:25px;line-height:25px;text-align:center;color:#333;font-size:12px;">1.04</div>
<div style="left:557px;top:448px;width:83px;height:25px;line-height:25px;text-align:center;color:#222;font-size:12px;">受半球</div>
<div style="left:641px;top:449px;width:51px;height:25px;line-height:25px;text-align:center;color:#333;font-size:12px;">0.85</div>
<div style="left:693px;top:449px;width:60px;height:25px;line-height:25px;text-align:center;color:#333;font-size:12px;">5.02</div>
<div style="left:754px;top:449px;width:60px;height:25px;line-height:25px;text-align:center;color:#333;font-size:12px;">3.25</div>
<div style="left:815px;top:449px;width:77px;height:25px;line-height:25px;text-align:center;color:#333;font-size:12px;">1.83</div>
<div style="left:893px;top:448px;width:37px;height:25px;line-height:25px;text-align:center;color:#0000b0;font-size:12px;">负</div>
<div style="left:931px;top:448px;width:38px;height:25px;line-height:25px;text-align:center;color:#0000b0;font-size:12px;">输</div>
<div style="left:970px;top:448px;width:57px;height:25px;line-height:25px;text-align:center;color:#0000b0;font-size:12px;">小</div>
<div style="left:1px;top:474px;width:80px;height:25px;line-height:25px;text-align:center;color:#fff;font-size:12px;">意甲</div>
<div style="left:82px;top:475px;width:75px;height:25px;line-height:25px;text-align:center;color:#333;font-size:12px;">25-08-24</div>
<div style="left:158px;top:474px;width:145px;height:25px;line-height:25px;text-align:center;color:#006400;font-size:12px;">热那亚</div>
<div style="left:304px;top:475px;width:89px;height:25px;line-height:25px;text-align:center;color:#222;font-size:12px;"><span style="color:#c00">0-0</span><span style="color:#333">(0-0)</span></div>
<div style="left:394px;top:475px;width:38px;height:25px;line-height:25px;text-align:center;color:#333;font-size:12px;">3-7</div>
<div style="left:433px;top:474px;width:74px;height:25px;line-height:25px;text-align:center;color:#222;font-size:12px;">莱切</div>
<div style="left:508px;top:475px;width:48px;height:25px;line-height:25px;text-align:center;color:#333;font-size:12px;">1.02</div>
<div style="left:557px;top:474px;width:83px;height:25px;line-height:25px;text-align:center;color:#222;font-size:12px;">半/一</div>
<div style="left:641px;top:475px;width:51px;height:25px;line-height:25px;text-align:center;color:#333;font-size:12px;">0.87</div>
<div style="left:693px;top:475px;width:60px;height:25px;line-height:25px;text-align:center;color:#333;font-size:12px;">1.75</div>
<div style="left:754px;top:475px;width:60px;height:25px;line-height:25px;text-align:center;color:#333;font-size:12px;">3.42</div>
<div style="left:815px;top:475px;width:77px;height:25px;line-height:25px;text-align:center;color:#333;font-size:12px;">5.35</div>
<div style="left:893px;top:474px;width:37px;height:25px;line-height:25px;text-align:center;color:#006400;font-size:12px;">平</div>
<div style="left:931px;top:474px;width:38px;height:25px;line-height:25px;text-align:center;color:#0000b0;font-size:12px;">输</div>
<div style="left:970px;top:474px;width:57px;height:25px;line-height:25px;text-align:center;color:#0000b0;font-size:12px;">小</div>
<div style="left:1px;top:500px;width:80px;height:25px;line-height:25px;text-align:center;color:#fff;font-size:12px;">意杯</div>
<div style="left:82px;top:501px;width:75px;height:25px;line-height:25px;text-align:center;color:#333;font-size:12px;">25-08-16</div>
<div style="left:158px;top:500px;width:145px;height:25px;line-height:25px;text-align:center;color:#006400;font-size:12px;">热那亚</div>
<div style="left:304px;top:501px;width:89px;height:25px;line-height:25px;text-align:center;color:#222;font-size:12px;"><span style="color:#c00">3-0</span><span style="color:#333">(2-0)</span></div>
<div style="left:394px;top:501px;width:38px;height:25px;line-height:25px;text-align:center;color:#333;font-size:12px;">5-2</div>
<div style="left:433px;top:500px;width:74px;height:25px;line-height:25px;text-align:center;color:#222;font-size:12px;">维琴察</div>
<div style="left:508px;top:501px;width:48px;height:25px;line-height:25px;text-align:center;color:#333;font-size:12px;">1.02</div>
<div style="left:557px;top:500px;width:83px;height:25px;line-height:25px;text-align:center;color:#222;font-size:12px;">球半</div>
<div style="left:641px;top:501px;width:51px;height:25px;line-height:25px;text-align:center;color:#333;font-size:12px;">0.86</div>
<div style="left:693px;top:501px;width:60px;height:25px;line-height:25px;text-align:center;color:#333;font-size:12px;">1.31</div>
<div style="left:754px;top:501px;width:60px;height:25px;line-height:25px;text-align:center;color:#333;font-size:12px;">4.97</div>
<div style="left:815px;top:501px;width:77px;height:25px;line-height:25px;text-align:center;color:#333;font-size:12px;">9.27</div>
<div style="left:893px;top:500px;width:37px;height:25px;line-height:25px;text-align:center;color:#c00;font-size:12px;">胜</div>
<div style="left:931px;top:500px;width:38px;height:25px;line-height:25px;text-align:center;color:#c00;font-size:12px;">赢</div>
<div style="left:970px;top:500px;width:57px;height:25px;line-height:25px;text-align:center;color:#c00;font-size:12px;">大</div>
<div style="left:1px;top:526px;width:80px;height:25px;line-height:25px;text-align:center;color:#fff;font-size:12px;">球会友谊</div>
<div style="left:82px;top:527px;width:75px;height:25px;line-height:25px;text-align:center;color:#333;font-size:12px;">25-08-10</div>
<div style="left:158px;top:526px;width:145px;height:25px;line-height:25px;text-align:center;color:#222;font-size:12px;">雷恩</div>
<div style="left:304px;top:527px;width:89px;height:25px;line-height:25px;text-align:center;color:#222;font-size:12px;"><span style="color:#c00">2-2</span><span style="color:#333">(1-0)</span></div>
<div style="left:394px;top:527px;width:38px;height:25px;line-height:25px;text-align:center;color:#333;font-size:12px;">10-3</div>
<div style="left:433px;top:526px;width:74px;height:25px;line-height:25px;text-align:center;color:#006400;font-size:12px;">热那亚</div>
<div style="left:508px;top:527px;width:48px;height:25px;line-height:25px;text-align:center;color:#333;font-size:12px;"></div>
<div style="left:557px;top:526px;width:83px;height:25px;line-height:25px;text-align:center;color:#222;font-size:12px;"></div>
<div style="left:641px;top:527px;width:51px;height:25px;line-height:25px;text-align:center;color:#333;font-size:12px;"></div>
<div style="left:693px;top:527px;width:60px;height:25px;line-height:25px;text-align:center;color:#333;font-size:12px;">2.14</div>
<div style="left:754px;top:527px;width:60px;height:25px;line-height:25px;text-align:center;color:#333;font-size:12px;">3.44</div>
<div style="left:815px;top:527px;width:77px;height:25px;line-height:25px;text-align:center;color:#333;font-size:12px;">3.04</div>
<div style="left:893px;top:526px;width:37px;height:25px;line-height:25px;text-align:center;color:#006400;font-size:12px;">平</div>
<div style="left:931px;top:526px;width:38px;height:25px;line-height:25px;text-align:center;color:#222;font-size:12px;"></div>
<div style="left:970px;top:526px;width:57px;height:25px;line-height:25px;text-align:center;color:#222;font-size:12px;"></div>
<div style="left:1px;top:552px;width:80px;height:25px;line-height:25px;text-align:center;color:#fff;font-size:12px;">球会友谊</div>
<div style="left:82px;top:553px;width:75px;height:25px;line-height:25px;text-align:center;color:#333;font-size:12px;">25-08-01</div>
<div style="left:158px;top:552px;width:145px;height:25px;line-height:25px;text-align:center;color:#222;font-size:12px;">比利亚雷亚尔(中)</div>
<div style="left:304px;top:553px;width:89px;height:25px;line-height:25px;text-align:center;color:#222;font-size:12px;"><span style="color:#c00">1-3</span><span style="color:#333">(1-3)</span></div>
<div style="left:394px;top:553px;width:38px;height:25px;line-height:25px;text-align:center;color:#333;font-size:12px;">0-0</div>
<div style="left:433px;top:552px;width:74px;height:25px;line-height:25px;text-align:center;color:#006400;font-size:12px;">热那亚</div>
<div style="left:508px;top:553px;width:48px;height:25px;line-height:25px;text-align:center;color:#333;font-size:12px;"></div>
<div style="left:557px;top:552px;width:83px;height:25px;line-height:25px;text-align:center;color:#222;font-size:12px;"></div>
<div style="left:641px;top:553px;width:51px;height:25px;line-height:25px;text-align:center;color:#333;font-size:12px;"></div>
<div style="left:693px;top:553px;width:60px;height:25px;line-height:25px;text-align:center;color:#333;font-size:12px;">2.17</div>
<div style="left:754px;top:553px;width:60px;height:25px;line-height:25px;text-align:center;color:#333;font-size:12px;">3.44</div>
<div style="left:815px;top:553px;width:77px;height:25px;line-height:25px;text-align:center;color:#333;font-size:12px;">3.18</div>
<div style="left:893px;top:552px;width:37px;height:25px;line-height:25px;text-align:center;color:#c00;font-size:12px;">胜</div>
<div style="left:931px;top:552px;width:38px;height:25px;line-height:25px;text-align:center;color:#222;font-size:12px;"></div>
<div style="left:970px;top:552px;width:57px;height:25px;line-height:25px;text-align:center;color:#222;font-size:12px;"></div>
<div style="left:1px;top:578px;width:80px;height:25px;line-height:25px;text-align:center;color:#fff;font-size:12px;">球会友谊</div>
<div style="left:82px;top:579px;width:75px;height:25px;line-height:25px;text-align:center;color:#333;font-size:12px;">25-07-26</div>
<div style="left:158px;top:578px;width:145px;height:25px;line-height:25px;text-align:center;color:#006400;font-size:12px;">热那亚(中)</div>
<div style="left:304px;top:579px;width:89px;height:25px;line-height:25px;text-align:center;color:#222;font-size:12px;"><span style="color:#c00">3-2</span><span style="color:#333">(0-1)</span></div>
<div style="left:394px;top:579px;width:38px;height:25px;line-height:25px;text-align:center;color:#333;font-size:12px;">6-0</div>
<div style="left:433px;top:578px;width:74px;height:25px;line-height:25px;text-align:center;color:#222;font-size:12px;">曼托瓦</div>
<div style="left:508px;top:579px;width:48px;height:25px;line-height:25px;text-align:center;color:#333;font-size:12px;">0.77</div>
<div style="left:557px;top:578px;width:83px;height:25px;line-height:25px;text-align:center;color:#222;font-size:12px;">一球</div>
<div style="left:641px;top:579px;width:51px;height:25px;line-height:25px;text-align:center;color:#333;font-size:12px;">0.99</div>
<div style="left:693px;top:579px;width:60px;height:25px;line-height:25px;text-align:center;color:#333;font-size:12px;">1.47</div>
<div style="left:754px;top:579px;width:60px;height:25px;line-height:25px;text-align:center;color:#333;font-size:12px;">4.17</div>
<div style="left:815px;top:579px;width:77px;height:25px;line-height:25px;text-align:center;color:#333;font-size:12px;">5.88</div>
<div style="left:893px;top:578px;width:37px;height:25px;line-height:25px;text-align:center;color:#c00;font-size:12px;">胜</div>
<div style="left:931px;top:578px;width:38px;height:25px;line-height:25px;text-align:center;color:#006400;font-size:12px;">走</div>
<div style="left:970px;top:578px;width:57px;height:25px;line-height:25px;text-align:center;color:#c00;font-size:12px;">大</div>
<div style="left:1px;top:604px;width:80px;height:25px;line-height:25px;text-align:center;color:#fff;font-size:12px;">意甲</div>
<div style="left:82px;top:605px;width:75px;height:25px;line-height:25px;text-align:center;color:#333;font-size:12px;">25-05-25</div>
<div style="left:158px;top:604px;width:145px;height:25px;line-height:25px;text-align:center;color:#222;font-size:12px;">博洛尼亚</div>
<div style="left:304px;top:605px;width:89px;height:25px;line-height:25px;text-align:center;color:#222;font-size:12px;"><span style="color:#c00">1-3</span><span style="color:#333">(0-3)</span></div>
<div style="left:394px;top:605px;width:38px;height:25px;line-height:25px;text-align:center;color:#333;font-size:12px;">13-1</div>
<div style="left:433px;top:604px;width:74px;height:25px;line-height:25px;text-align:center;color:#006400;font-size:12px;">热那亚</div>
<div style="left:508px;top:605px;width:48px;height:25px;line-height:25px;text-align:center;color:#333;font-size:12px;">0.81</div>
<div style="left:557px;top:604px;width:83px;height:25px;line-height:25px;text-align:center;color:#222;font-size:12px;">一球</div>
<div style="left:641px;top:605px;width:51px;height:25px;line-height:25px;text-align:center;color:#333;font-size:12px;">1.08</div>
<div style="left:693px;top:605px;width:60px;height:25px;line-height:25px;text-align:center;color:#333;font-size:12px;">1.60</div>
<div style="left:754px;top:605px;width:60px;height:25px;line-height:25px;text-align:center;color:#333;font-size:12px;">4.00</div>
<div style="left:815px;top:605px;width:77px;height:25px;line-height:25px;text-align:center;color:#333;font-size:12px;">5.74</div>
<div style="left:893px;top:604px;width:37px;height:25px;line-height:25px;text-align:center;color:#c00;font-size:12px;">胜</div>
<div style="left:931px;top:604px;width:38px;height:25px;line-height:25px;text-align:center;color:#c00;font-size:12px;">赢</div>
<div style="left:970px;top:604px;width:57px;height:25px;line-height:25px;text-align:center;color:#c00;font-size:12px;">大</div>
<div style="left:1px;top:630px;width:80px;height:25px;line-height:25px;text-align:center;color:#fff;font-size:12px;">意甲</div>
<div style="left:82px;top:631px;width:75px;height:25px;line-height:25px;text-align:center;color:#333;font-size:12px;">25-05-18</div>
<div style="left:158px;top:630px;width:145px;height:25px;line-height:25px;text-align:center;color:#006400;font-size:12px;">热那亚</div>
<div style="left:304px;top:631px;width:89px;height:25px;line-height:25px;text-align:center;color:#222;font-size:12px;"><span style="color:#c00">2-3</span><span style="color:#333">(1-0)</span></div>
<div style="left:394px;top:631px;width:38px;height:25px;line-height:25px;text-align:center;color:#333;font-size:12px;">7-0</div>
<div style="left:433px;top:630px;width:74px;height:25px;line-height:25px;text-align:center;color:#222;font-size:12px;">亚特兰大</div>
<div style="left:508px;top:631px;width:48px;height:25px;line-height:25px;text-align:center;color:#333;font-size:12px;">0.88</div>
<div style="left:557px;top:630px;width:83px;height:25px;line-height:25px;text-align:center;color:#222;font-size:12px;">受平/半</div>
<div style="left:641px;top:631px;width:51px;height:25px;line-height:25px;text-align:center;color:#333;font-size:12px;">1.01</div>
<div style="left:693px;top:631px;width:60px;height:25px;line-height:25px;text-align:center;color:#333;font-size:12px;">3.68</div>
<div style="left:754px;top:631px;width:60px;height:25px;line-height:25px;text-align:center;color:#333;font-size:12px;">3.48</div>
<div style="left:815px;top:631px;width:77px;height:25px;line-height:25px;text-align:center;color:#333;font-size:12px;">2.09</div>
<div style="left:893px;top:630px;width:37px;height:25px;line-height:25px;text-align:center;color:#0000b0;font-size:12px;">负</div>
<div style="left:931px;top:630px;width:38px;height:25px;line-height:25px;text-align:center;color:#0000b0;font-size:12px;">输</div>
<div style="left:970px;top:630px;width:57px;height:25px;line-height:25px;text-align:center;color:#c00;font-size:12px;">大</div>
<div style="left:1px;top:656px;width:80px;height:25px;line-height:25px;text-align:center;color:#fff;font-size:12px;">意甲</div>
<div style="left:82px;top:657px;width:75px;height:25px;line-height:25px;text-align:center;color:#333;font-size:12px;">25-05-12</div>
<div style="left:158px;top:656px;width:145px;height:25px;line-height:25px;text-align:center;color:#222;font-size:12px;">那不勒斯</div>
<div style="left:304px;top:657px;width:89px;height:25px;line-height:25px;text-align:center;color:#222;font-size:12px;"><span style="color:#c00">2-2</span><span style="color:#333">(1-1)</span></div>
<div style="left:394px;top:657px;width:38px;height:25px;line-height:25px;text-align:center;color:#333;font-size:12px;">8-0</div>
<div style="left:433px;top:656px;width:74px;height:25px;line-height:25px;text-align:center;color:#006400;font-size:12px;">热那亚</div>
<div style="left:508px;top:657px;width:48px;height:25px;line-height:25px;text-align:center;color:#333;font-size:12px;">0.90</div>
<div style="left:557px;top:656px;width:83px;height:25px;line-height:25px;text-align:center;color:#222;font-size:12px;">球半</div>
<div style="left:641px;top:657px;width:51px;height:25px;line-height:25px;text-align:center;color:#333;font-size:12px;">0.99</div>
<div style="left:693px;top:657px;width:60px;height:25px;line-height:25px;text-align:center;color:#333;font-size:12px;">1.29</div>
<div style="left:754px;top:657px;width:60px;height:25px;line-height:25px;text-align:center;color:#333;font-size:12px;">5.30</div>
<div style="left:815px;top:657px;width:77px;height:25px;line-height:25px;text-align:center;color:#333;font-size:12px;">11.39</div>
<div style="left:893px;top:656px;width:37px;height:25px;line-height:25px;text-align:center;color:#006400;font-size:12px;">平</div>
<div style="left:931px;top:656px;width:38px;height:25px;line-height:25px;text-align:center;color:#c00;font-size:12px;">赢</div>
<div style="left:970px;top:656px;width:57px;height:25px;line-height:25px;text-align:center;color:#c00;font-size:12px;">大</div>
<div style="left:1px;top:682px;width:80px;height:25px;line-height:25px;text-align:center;color:#fff;font-size:12px;">意甲</div>
<div style="left:82px;top:683px;width:75px;height:25px;line-height:25px;text-align:center;color:#333;font-size:12px;">25-05-06</div>
<div style="left:158px;top:682px;width:145px;height:25px;line-height:25px;text-align:center;color:#006400;font-size:12px;">热那亚</div>
<div style="left:304px;top:683px;width:89px;height:25px;line-height:25px;text-align:center;color:#222;font-size:12px;"><span style="color:#c00">1-2</span><span style="color:#333">(0-0)</span></div>
<div style="left:394px;top:683px;width:38px;height:25px;line-height:25px;text-align:center;color:#333;font-size:12px;">8-7</div>
<div style="left:433px;top:682px;width:74px;height:25px;line-height:25px;text-align:center;color:#222;font-size:12px;">AC米兰</div>
<div style="left:508px;top:683px;width:48px;height:25px;line-height:25px;text-align:center;color:#333;font-size:12px;">0.93</div>
<div style="left:557px;top:682px;width:83px;height:25px;line-height:25px;text-align:center;color:#222;font-size:12px;">受半/一</div>
<div style="left:641px;top:683px;width:51px;height:25px;line-height:25px;text-align:center;color:#333;font-size:12px;">0.96</div>
<div style="left:693px;top:683px;width:60px;height:25px;line-height:25px;text-align:center;color:#333;font-size:12px;">4.61</div>
<div style="left:754px;top:683px;width:60px;height:25px;line-height:25px;text-align:center;color:#333;font-size:12px;">3.73</div>
<div style="left:815px;top:683px;width:77px;height:25px;line-height:25px;text-align:center;color:#333;font-size:12px;">1.76</div>
<div style="left:893px;top:682px;width:37px;height:25px;line-height:25px;text-align:center;color:#0000b0;font-size:12px;">负</div>
<div style="left:931px;top:682px;width:38px;height:25px;line-height:25px;text-align:center;color:#0000b0;font-size:12px;">输</div>
<div style="left:970px;top:682px;width:57px;height:25px;line-height:25px;text-align:center;color:#c00;font-size:12px;">大</div>
<div style="left:1px;top:709px;width:1026px;height:25px;line-height:25px;text-align:center;color:#222;font-size:12px;letter-spacing:0.2px">近<span style="color:#c00">10</span>场,胜4平3负3, 胜率:<span style="color:#c00">40%</span> 让胜率:<span style="color:#c00">37.5%</span> 大率:<span style="color:#c00">75%</span> 单率:<span style="color:#c00">50%</span></div>
<div class="sel" style="left:540px;top:409px;width:59px;height:17px;"><span class="lab" style="font-size:13px;">Crow*</span><svg class="chev" width="10" height="7" viewBox="0 0 10 7" style="right:4px;top:5px"><path d="M1 1.2 L5 5.2 L9 1.2" stroke="#000" stroke-width="2.2" fill="none"/></svg></div>
<div class="sel" style="left:608px;top:409px;width:49px;height:17px;"><span class="lab" style="font-size:13px;">终指</span><svg class="chev" width="10" height="7" viewBox="0 0 10 7" style="right:4px;top:5px"><path d="M1 1.2 L5 5.2 L9 1.2" stroke="#000" stroke-width="2.2" fill="none"/></svg></div>
<div class="sel" style="left:728px;top:409px;width:68px;height:17px;"><span class="lab" style="font-size:13px;">平均值</span><svg class="chev" width="10" height="7" viewBox="0 0 10 7" style="right:4px;top:5px"><path d="M1 1.2 L5 5.2 L9 1.2" stroke="#000" stroke-width="2.2" fill="none"/></svg></div>
<div class="sel" style="left:806px;top:409px;width:48px;height:17px;"><span class="lab" style="font-size:13px;">终指</span><svg class="chev" width="10" height="7" viewBox="0 0 10 7" style="right:4px;top:5px"><path d="M1 1.2 L5 5.2 L9 1.2" stroke="#000" stroke-width="2.2" fill="none"/></svg></div>
<div class="sel" style="left:934px;top:409px;width:49px;height:17px;"><span class="lab" style="font-size:13px;">全场</span><svg class="chev" width="10" height="7" viewBox="0 0 10 7" style="right:4px;top:5px"><path d="M1 1.2 L5 5.2 L9 1.2" stroke="#000" stroke-width="2.2" fill="none"/></svg></div></body></html>
